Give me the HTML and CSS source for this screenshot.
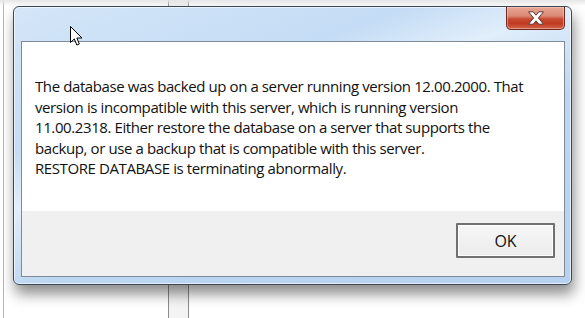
FILE: index.html
```html
<!DOCTYPE html>
<html lang="en">
<head>
  <meta charset="UTF-8">
  <title>Restore Database</title>
  <link rel="stylesheet" href="styles.css">
</head>
<body>
  <div class="desktop">
    <div class="dialog">
      <div class="titlebar">
        <button class="close-btn" aria-label="Close">
          <svg width="18" height="14" viewBox="0 0 18 14">
            <path d="M1.5 0.8 H6.2 L9 4.2 L11.8 0.8 H16.5 L11.4 7 L16.5 13.2 H11.8 L9 9.8 L6.2 13.2 H1.5 L6.6 7 Z" fill="#fff" stroke="#5a3a36" stroke-width="1" stroke-linejoin="round"/>
          </svg>
        </button>
      </div>
      <div class="panel">
        <div class="message">
          <p>The database was backed up on a server running version 12.00.2000. That version is incompatible with this server, which is running version 11.00.2318. Either restore the database on a server that supports the backup, or use a backup that is compatible with this server.<br>RESTORE DATABASE is terminating abnormally.</p>
        </div>
        <div class="footer">
          <button class="btn-ok">OK</button>
        </div>
      </div>
    </div>
    <svg class="cursor" width="13" height="21" viewBox="0 0 13 21">
      <path d="M0.5 0.5 V16.5 L4.3 12.9 L6.8 19 L9.3 18 L6.9 12 H12 Z" fill="#fff" stroke="#000" stroke-width="1" stroke-linejoin="round"/>
    </svg>
  </div>
</body>
</html>
```

FILE: styles.css
```css
* {
    box-sizing: border-box;
}
body {
    margin: 0;
    padding: 0;
    background: #fff;
    font-family: 'Open Sans', 'Noto Sans', sans-serif;
}
.desktop {
    position: relative;
    width: 585px;
    height: 318px;
    overflow: hidden;
    padding: 6px 0 0 13px;
    background:
        linear-gradient(to bottom, #e6e6e6, rgba(255, 255, 255, 0) 6px),
        linear-gradient(to right, transparent 3px, #b8b8b8 3px, #b8b8b8 4px, transparent 4px),
        linear-gradient(to right, transparent 168px, #8c8c8c 168px, #8c8c8c 169px, #f4f4f4 169px, #f4f4f4 188px, #8c8c8c 188px, #8c8c8c 189px, transparent 189px),
        #fff;
}
.dialog {
    width: 559px;
    height: 279px;
    border: 1px solid #3d4654;
    border-radius: 6px;
    padding: 0 6px 7px 7px;
    background: linear-gradient(160deg, #d4e6f8 0%, #c4dcf5 30%, #e1eefb 42%, #bcd6f2 60%, #b6d2f0 100%);
    box-shadow: 2px 9px 14px rgba(0, 0, 0, 0.45), inset 0 0 0 1px rgba(255, 255, 255, 0.6);
    display: flex;
    flex-direction: column;
}
.titlebar {
    height: 34px;
    display: flex;
    justify-content: flex-end;
    align-items: flex-start;
}
.close-btn {
    width: 59px;
    height: 23px;
    margin: 0;
    padding: 0;
    border: 1px solid #6a2a20;
    border-top: none;
    border-radius: 0 0 5px 5px;
    background: linear-gradient(to bottom, #e7a596 0%, #dc8a76 40%, #c84a32 55%, #c23a22 75%, #d2654a 100%);
    box-shadow: inset 0 0 0 1px rgba(255, 220, 210, 0.45);
    display: flex;
    align-items: center;
    justify-content: center;
}
.panel {
    flex: 1;
    border: 1px solid #7e8a98;
    display: flex;
    flex-direction: column;
}
.message {
    flex: 1;
    background: #fff;
    padding: 34px 12px 0 13px;
}
.message p {
    margin: 0;
    font-size: 15px;
    letter-spacing: -0.4px;
    line-height: 20.5px;
    color: #111;
    width: 490px;
}
.footer {
    height: 65px;
    background: #f0f0f0;
    display: flex;
    justify-content: flex-end;
    padding: 12px 9px 0 0;
}
.btn-ok {
    width: 99px;
    height: 35px;
    border: 2px solid #707070;
    border-radius: 1px;
    background: linear-gradient(to bottom, #f6f6f6, #ececec);
    box-shadow: inset 0 0 0 1px #fdfdfd;
    font-family: 'Open Sans', 'Noto Sans', sans-serif;
    font-size: 16px;
    color: #111;
}
.cursor {
    position: absolute;
    left: 70px;
    top: 26px;
}
```
